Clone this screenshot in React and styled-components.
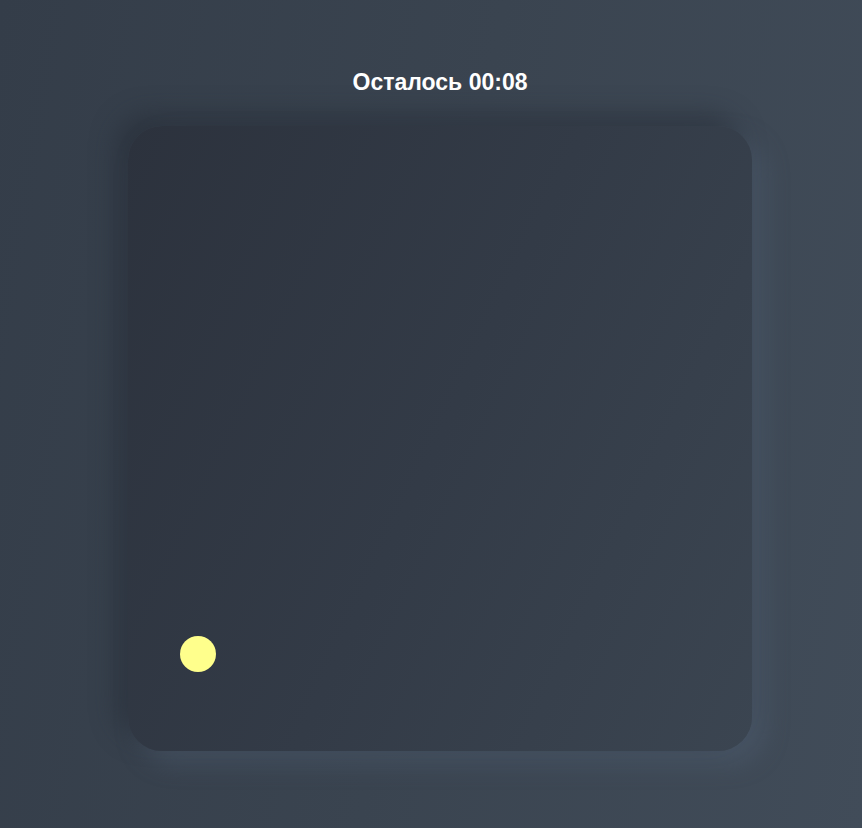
import React from "react";
import styled, { createGlobalStyle } from "styled-components";

const Global = createGlobalStyle`
  html, body { margin: 0; padding: 0; }
  body {
    min-height: 100vh;
    background: linear-gradient(100deg, #343d49 0%, #3a4450 50%, #414c59 100%);
    font-family: "Liberation Sans", Arial, sans-serif;
  }
`;

const Page = styled.div`
  min-height: 828px;
  display: flex;
  flex-direction: column;
  align-items: center;
  padding: 66px 0 0 18px;
  box-sizing: border-box;
`;

const Timer = styled.h1`
  margin: 0;
  font-size: 23px;
  font-weight: 700;
  color: #ffffff;
  line-height: 32px;
`;

const Board = styled.div`
  position: relative;
  margin-top: 28px;
  width: 624px;
  height: 625px;
  border-radius: 34px;
  background: linear-gradient(115deg, #2c323d 0%, #333b47 50%, #3b4551 100%);
  box-shadow: -12px -12px 24px rgba(36, 42, 51, 0.5),
    12px 12px 24px rgba(82, 98, 118, 0.45);
`;

const Ball = styled.div`
  position: absolute;
  width: 36px;
  height: 36px;
  border-radius: 50%;
  background: #ffff8c;
`;

export default function App() {
  return (
    <>
      <Global />
      <Page>
        <Timer>Осталось 00:08</Timer>
        <Board>
          <Ball style={{ left: 52, top: 510 }} />
        </Board>
      </Page>
    </>
  );
}
